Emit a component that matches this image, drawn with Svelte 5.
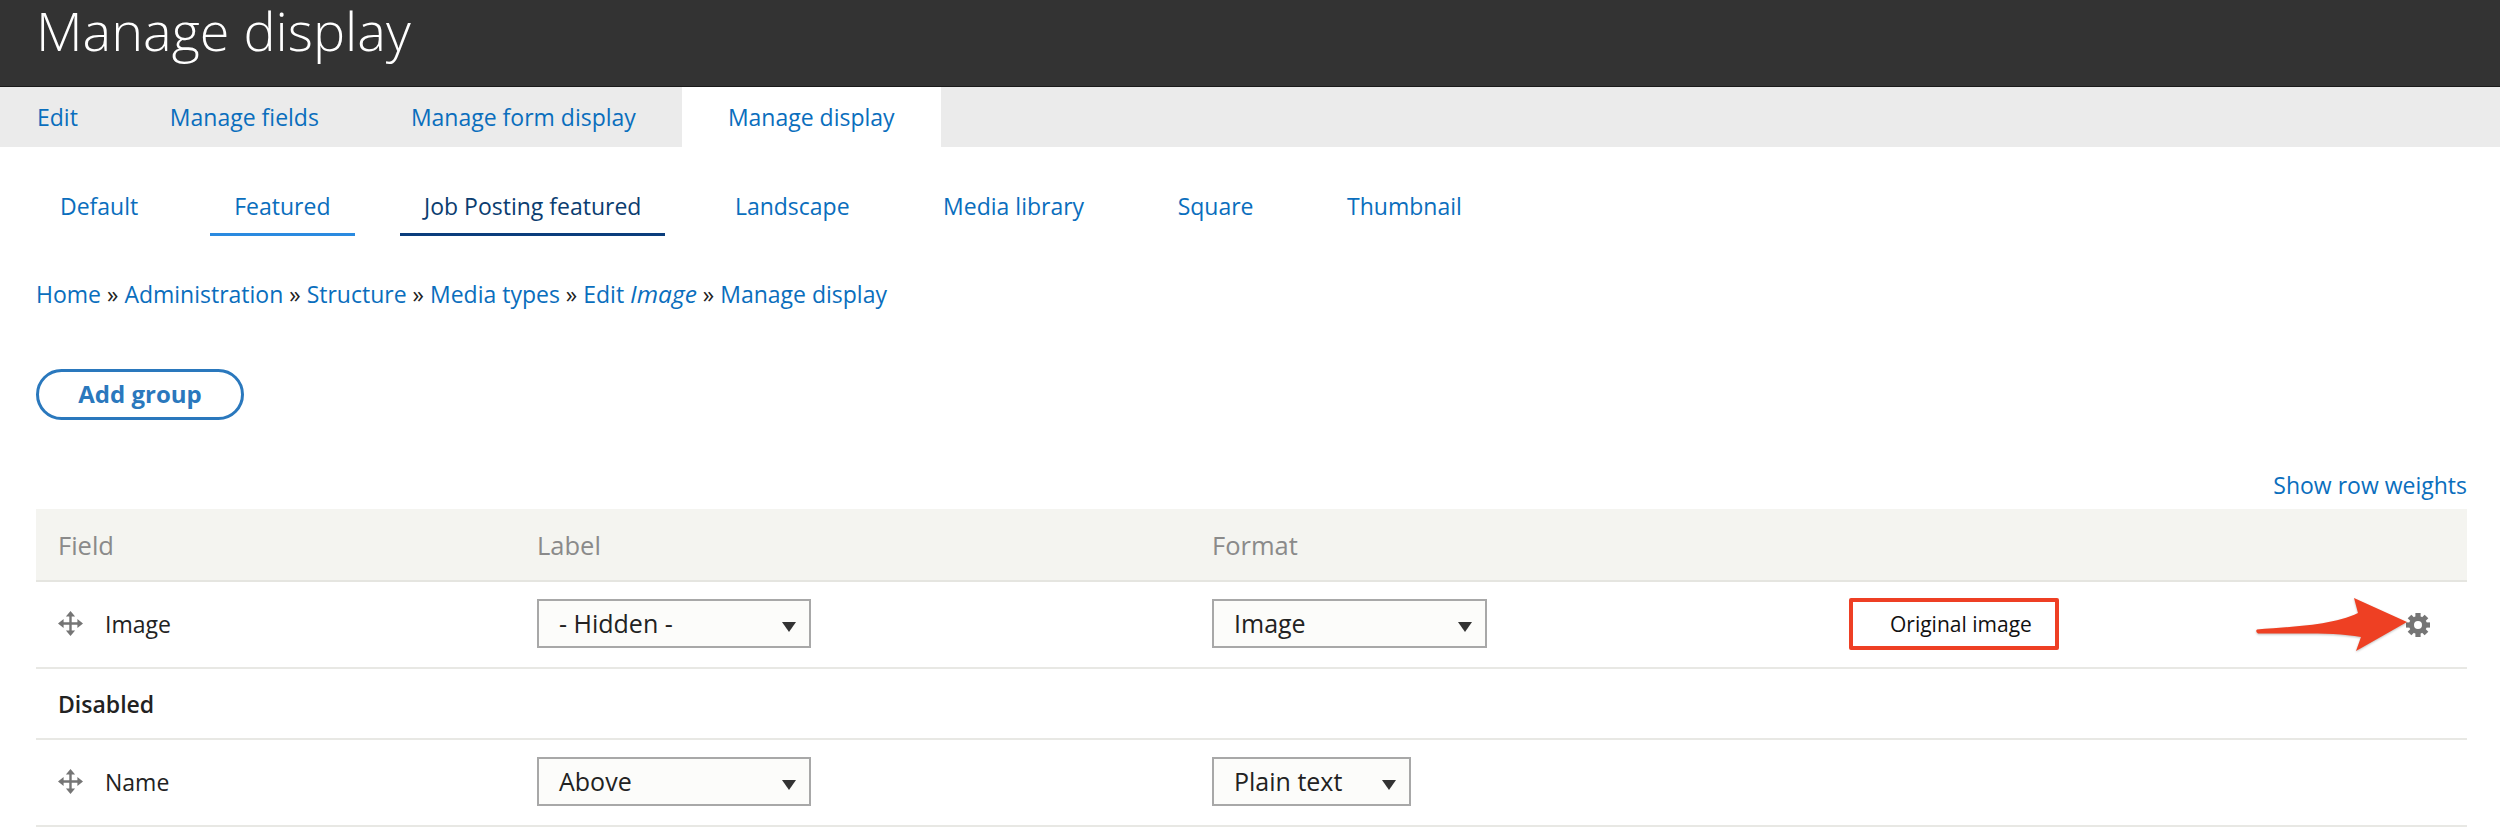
<script>
  const primary = ['Edit', 'Manage fields', 'Manage form display', 'Manage display'];
  const secondary = ['Default', 'Featured', 'Job Posting featured', 'Landscape', 'Media library', 'Square', 'Thumbnail'];
  const teeth = [0, 45, 90, 135, 180, 225, 270, 315];
</script>

{#snippet drag()}
  <svg class="drag" viewBox="0 0 25 25" width="25" height="25">
    <path d="M11.3 5h2.4v6.3H20v2.4h-6.3V20h-2.4v-6.3H5v-2.4h6.3z" fill="#757575"/>
    <path d="M12.5 0l4.6 5.6H7.9zM12.5 25l-4.6-5.6h9.2zM0 12.5l5.6-4.6v9.2zM25 12.5l-5.6 4.6V7.9z" fill="#757575"/>
  </svg>
{/snippet}

<header class="title"><h1>Manage display</h1></header>

<nav class="primary">
  {#each primary as tab, i}
    <a href="#top" class:active={i === 3}>{tab}</a>
  {/each}
</nav>

<nav class="secondary">
  {#each secondary as tab, i}
    <a href="#top" class:sel={i === 1} class:cur={i === 2}>{tab}</a>
  {/each}
</nav>

<main>
  <div class="crumbs">
    <a href="#top">Home</a> » <a href="#top">Administration</a> » <a href="#top">Structure</a> » <a href="#top">Media types</a> » <a href="#top">Edit <em>Image</em></a> » <a href="#top">Manage display</a>
  </div>

  <button class="add">Add group</button>

  <div class="weights"><a href="#top">Show row weights</a></div>

  <div class="tablewrap">
    <table>
      <thead>
        <tr><th class="c1">Field</th><th class="c2">Label</th><th class="c3">Format</th><th class="c4"></th><th class="c5"></th></tr>
      </thead>
      <tbody>
        <tr class="row">
          <td><span class="field">{@render drag()}Image</span></td>
          <td><div class="select w1"><span>- Hidden -</span><i></i></div></td>
          <td><div class="select w2"><span>Image</span><i></i></div></td>
          <td><span class="summary">Original image</span></td>
          <td class="gearcell">
            <svg viewBox="-12 -12 24 24" width="24" height="24">
              {#each teeth as a}
                <rect x="-2.6" y="-12" width="5.2" height="6" fill="#757575" transform="rotate({a})"/>
              {/each}
              <circle r="6.5" fill="none" stroke="#757575" stroke-width="5"/>
            </svg>
          </td>
        </tr>
        <tr class="region"><td colspan="5">Disabled</td></tr>
        <tr class="row">
          <td><span class="field">{@render drag()}Name</span></td>
          <td><div class="select w1"><span>Above</span><i></i></div></td>
          <td><div class="select w3"><span>Plain text</span><i></i></div></td>
          <td></td>
          <td></td>
        </tr>
      </tbody>
    </table>

    <svg class="arrow" viewBox="0 0 156 56" width="156" height="56">
      <path d="M3 33.5C30 31 78 30 104 17L100 2L153 26L102 55L107 41C80 36 40 38 4 37.5Q1 35.500 3 33.500z" fill="#ee4023"/>
    </svg>
  </div>
</main>

<style>
  :global(body) {
    font-family: "Open Sans", "Liberation Sans", sans-serif;
    background: #fff;
    color: #222;
    overflow: hidden;
  }
  a {
    color: #0a6ebd;
    text-decoration: none;
  }
  .title {
    height: 86px;
    background: #333;
    border-bottom: 1px solid #1a1a1a;
    padding-left: 36px;
    overflow: hidden;
  }
  h1 {
    margin: 0;
    color: #fff;
    font-size: 54px;
    line-height: 60px;
    font-weight: 300;
  }
  .primary {
    display: flex;
    height: 60px;
    background: #ebebeb;
  }
  .primary a {
    display: flex;
    align-items: center;
    font-size: 23px;
    padding: 0 46px;
  }
  .primary a:first-child {
    padding-left: 37px;
  }
  .primary a.active {
    background: #fff;
  }
  .secondary {
    display: flex;
    gap: 45.5px;
    box-sizing: border-box;
    padding: 17px 0 0 36px;
    height: 90px;
  }
  .secondary a {
    font-size: 23px;
    height: 72px;
    padding: 14px 24px 0;
    display: flex;
    align-items: center;
    box-sizing: border-box;
    border-bottom: 3px solid transparent;
  }
  .secondary a:first-child {
    margin-right: 2.5px;
  }
  .secondary a.sel {
    border-bottom-color: #2a8ae0;
  }
  .secondary a.cur {
    color: #0b3d70;
    border-bottom-color: #0b3d7c;
  }
  main {
    padding: 0 33px 0 36px;
  }
  .crumbs {
    font-size: 23px;
    line-height: 30px;
    margin-top: 42px;
  }
  .crumbs em {
    font-size: 24.5px;
  }
  .add {
    display: block;
    margin-top: 60px;
    width: 208px;
    height: 51px;
    box-sizing: border-box;
    border: 3px solid #2a78bd;
    border-radius: 26px;
    background: #fff;
    color: #2a78bd;
    font: 700 24px "Open Sans", sans-serif;
    padding: 0 0 3px;
  }
  .weights {
    text-align: right;
    font-size: 23px;
    line-height: 30px;
    margin-top: 50px;
    height: 39px;
  }
  .tablewrap {
    position: relative;
  }
  table {
    width: 100%;
    table-layout: fixed;
    border-collapse: collapse;
  }
  th {
    background: #f4f4f0;
    color: #8a8a8a;
    font-weight: 400;
    font-size: 25.500px;
    text-align: left;
    height: 71px;
    padding: 0 0 0 22px;
    border-bottom: 2px solid #e5e5e0;
  }
  .c1 { width: 457px; }
  .c2 { width: 653px; }
  .c3 { width: 615px; }
  .c4 { width: 525px; padding: 0; }
  td {
    padding: 0 0 0 22px;
    font-size: 23px;
    border-bottom: 2px solid #e8e8e4;
  }
  .row td {
    height: 85px;
  }
  .region td {
    height: 69px;
    font-weight: 600;
  }
  .field {
    display: flex;
    align-items: center;
    gap: 22px;
    margin-top: -2px;
  }
  .drag {
    flex: none;
  }
  .select {
    display: flex;
    align-items: center;
    justify-content: space-between;
    box-sizing: border-box;
    height: 49px;
    padding: 0 13px 0 20px;
    border: 2px solid #a8a8a8;
    background: #fcfcfa;
    font-size: 25px;
    margin-top: -2px;
  }
  .select span {
    margin-top: -2px;
  }
  .select i {
    width: 0;
    height: 0;
    border-left: 7.5px solid transparent;
    border-right: 7.5px solid transparent;
    border-top: 10px solid #333;
    margin-top: 6px;
  }
  .w1 { width: 274px; }
  .w2 { width: 275px; }
  .w3 { width: 199px; }
  .summary {
    display: block;
    width: 210px;
    height: 52px;
    line-height: 44px;
    box-sizing: border-box;
    border: 4px solid #ee3f24;
    border-radius: 2px;
    padding-left: 37px;
    font-size: 21px;
    color: #111;
    white-space: nowrap;
    margin-top: -2px;
  }
  .gearcell {
    text-align: right;
    padding: 0 37px 0 0;
  }
  .gearcell svg {
    display: inline-block;
    vertical-align: middle;
    margin-top: -5px;
  }
  .arrow {
    position: absolute;
    left: 2218px;
    top: 87px;
    filter: drop-shadow(0 1px 1px rgba(0, 0, 0, 0.25));
  }
</style>
